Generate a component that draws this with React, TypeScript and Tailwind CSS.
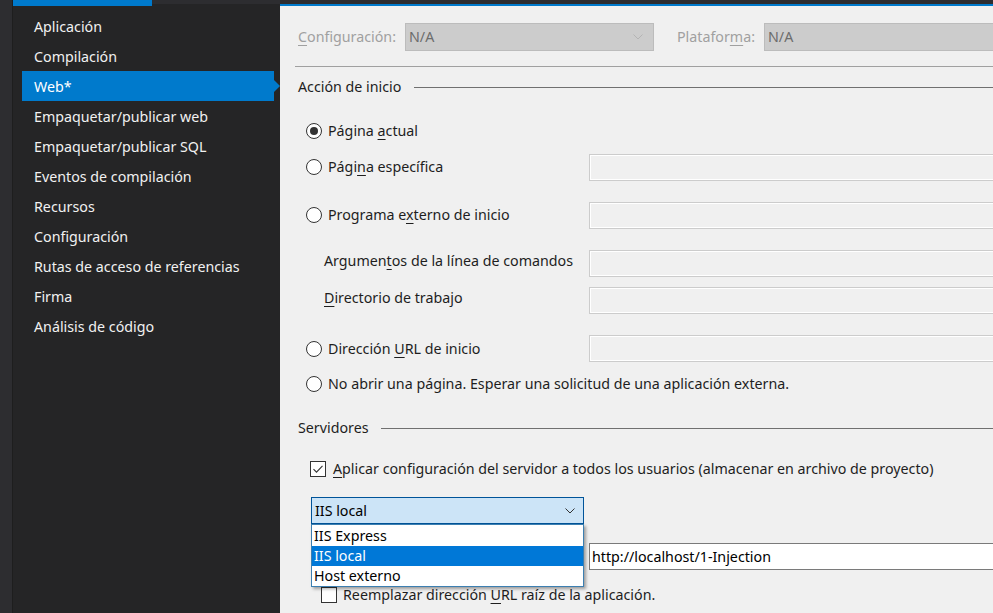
import React from "react";

const items = [
  "Aplicación",
  "Compilación",
  "Web*",
  "Empaquetar/publicar web",
  "Empaquetar/publicar SQL",
  "Eventos de compilación",
  "Recursos",
  "Configuración",
  "Rutas de acceso de referencias",
  "Firma",
  "Análisis de código",
];

function K({ children }: { children: React.ReactNode }) {
  return <span className="underline underline-offset-[3px] decoration-1">{children}</span>;
}

function Radio({ checked }: { checked?: boolean }) {
  return (
    <span className="w-4 h-4 shrink-0 rounded-full border border-[#333333] bg-white flex items-center justify-center">
      {checked && <span className="w-2 h-2 rounded-full bg-[#333333]" />}
    </span>
  );
}

function Check({ checked }: { checked?: boolean }) {
  return (
    <span className="w-4 h-4 shrink-0 border border-[#333333] bg-white flex items-center justify-center">
      {checked && (
        <svg width="12" height="12" viewBox="0 0 12 12">
          <path d="M1.5 6.2 L4.5 9.2 L10.5 2.8" fill="none" stroke="#333333" strokeWidth="1.1" />
        </svg>
      )}
    </span>
  );
}

function Box() {
  return <div className="w-[420px] h-[27px] shrink-0 border border-[#cccccc] bg-[#f0f0f0] shadow-[inset_0_0_0_1px_#ffffff]" />;
}

function Group({ title, lineGap }: { title: string; lineGap: string }) {
  return (
    <div className="flex items-center h-5 pl-[3px]">
      <span className="whitespace-nowrap">{title}</span>
      <div className={`flex-1 h-px bg-[#707070] ${lineGap}`} />
    </div>
  );
}

function Chevron({ color }: { color: string }) {
  return (
    <svg width="10" height="6" viewBox="0 0 10 6">
      <path d="M0.5 0.5 L5 5 L9.5 0.5" fill="none" stroke={color} strokeWidth="1" />
    </svg>
  );
}

export default function App() {
  return (
    <div className="w-[993px] h-[613px] overflow-hidden flex font-['Noto_Sans',sans-serif] text-[14.25px] leading-5">
      <div className="w-[13px] bg-[#2d2d30] border-r border-[#1e1e1e] shrink-0" />
      <div className="w-[267px] bg-[#252526] shrink-0 flex flex-col">
        <div className="flex h-[6px]">
          <div className="w-[139px] h-[6px] bg-[#007acc]" />
          <div className="flex-1 h-[4px] bg-[#2d2d30]" />
        </div>
        <div className="pt-[5px] pl-[9px] flex flex-col">
          {items.map((it) =>
            it === "Web*" ? (
              <div key={it} className="flex items-center h-[30px]">
                <div className="w-[252px] h-[30px] bg-[#007acc] text-white flex items-center pl-3 pt-[2px]">{it}</div>
                <div className="w-0 h-0 border-y-[6px] border-l-[6px] border-y-transparent border-l-[#007acc]" />
              </div>
            ) : (
              <div key={it} className="h-[30px] flex items-center pl-3 pt-[2px] text-[#f1f1f1] whitespace-nowrap">{it}</div>
            )
          )}
        </div>
      </div>

      <div className="flex-1 bg-[#f0f0f0] flex flex-col overflow-hidden text-[#1e1e1e]">
        <div className="h-[4px] bg-[#2d2d30] shrink-0" />
        <div className="h-[2px] bg-[#007acc] shrink-0" />

        <div className="pl-[15px] flex flex-col">
          <div className="mt-[17px] h-[28px] flex items-center">
            <div className="w-[110px] shrink-0 pl-[3px] text-[#a0a0a0] whitespace-nowrap"><K>C</K>onfiguración:</div>
            <div className="w-[249px] h-[28px] shrink-0 bg-[#cccccc] border border-[#bcbcbc] flex items-center justify-between pl-[3px] pr-[10px] text-[#6d6d6d]">
              <span>N/A</span>
              <Chevron color="#b4b4b4" />
            </div>
            <div className="w-[87px] shrink-0 ml-[23px] text-[#a0a0a0] whitespace-nowrap">Platafor<K>m</K>a:</div>
            <div className="w-[300px] h-[28px] shrink-0 bg-[#cccccc] border border-[#bcbcbc] flex items-center pl-[3px] text-[#6d6d6d]">
              <span>N/A</span>
            </div>
          </div>

          <div className="mt-[15px] h-px bg-[#a0a0a0]" />

          <div className="mt-[10px]">
            <Group title="Acción de inicio" lineGap="ml-[13px]" />
          </div>

          <div className="mt-[21px] h-[26px] flex items-center pl-[11px] gap-[6px]">
            <Radio checked />
            <span>Página <K>a</K>ctual</span>
          </div>

          <div className="mt-[10px] h-[27px] flex items-center">
            <div className="w-[294px] shrink-0 flex items-center pl-[11px] gap-[6px] pb-[2px]">
              <Radio />
              <span>Pági<K>n</K>a específica</span>
            </div>
            <Box />
          </div>

          <div className="mt-[21px] h-[27px] flex items-center">
            <div className="w-[294px] shrink-0 flex items-center pl-[11px] gap-[6px] pb-[2px]">
              <Radio />
              <span>Programa e<K>x</K>terno de inicio</span>
            </div>
            <Box />
          </div>

          <div className="mt-[21px] h-[27px] flex items-center">
            <div className="w-[294px] shrink-0 pl-[29px] pb-[6px] whitespace-nowrap">Argumen<K>t</K>os de la línea de comandos</div>
            <Box />
          </div>

          <div className="mt-[10px] h-[27px] flex items-center">
            <div className="w-[294px] shrink-0 pl-[29px] pb-[6px]"><K>D</K>irectorio de trabajo</div>
            <Box />
          </div>

          <div className="mt-[21px] h-[27px] flex items-center">
            <div className="w-[294px] shrink-0 flex items-center pl-[11px] gap-[6px]">
              <Radio />
              <span>Dirección <K>U</K>RL de inicio</span>
            </div>
            <Box />
          </div>

          <div className="mt-[10px] h-[24px] flex items-center pl-[11px] gap-[6px] whitespace-nowrap">
            <Radio />
            <span>No abrir una página. Esperar una solicitud de una aplicación externa.</span>
          </div>

          <div className="mt-[22px]">
            <Group title="Servidores" lineGap="ml-[12px]" />
          </div>

          <div className="mt-[19px] h-[24px] flex items-center pl-[15px] gap-[7px] whitespace-nowrap">
            <Check checked />
            <span><K>A</K>plicar configuración del servidor a todos los usuarios (almacenar en archivo de proyecto)</span>
          </div>

          <div className="relative">
            <div className="mt-[16px] ml-[16px] w-[273px] h-[27px] bg-[#cce4f7] border border-[#005499] flex items-center justify-between pl-[3px] pr-[8px] text-black">
              <span>IIS local</span>
              <Chevron color="#333333" />
            </div>

            <div className="mt-[19px] h-[27px] flex items-center">
              <div className="w-[294px] shrink-0" />
              <div className="w-[420px] h-[27px] shrink-0 bg-white border border-[#7a7a7a] flex items-center pl-[2px] text-black">
                http://localhost/1-Injection
              </div>
            </div>

            <div className="mt-[13px] h-[24px] flex items-center pl-[26px] gap-[6px] whitespace-nowrap">
              <Check />
              <span>Reemplazar dirección <K>U</K>RL raíz de la aplicación.</span>
            </div>

            <div className="absolute left-[16px] top-[43px] w-[273px] h-[63px] bg-white border border-[#3c7fb1] shadow-[2px_2px_3px_rgba(0,0,0,0.35)] flex flex-col py-px text-black">
              <div className="h-[20px] flex items-center pl-[2px]">IIS Express</div>
              <div className="h-[20px] flex items-center pl-[2px] bg-[#0078d7] text-white">IIS local</div>
              <div className="h-[20px] flex items-center pl-[2px]">Host externo</div>
            </div>
          </div>
        </div>
      </div>
    </div>
  );
}
